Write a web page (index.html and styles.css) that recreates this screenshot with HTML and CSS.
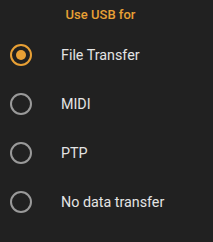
FILE: index.html
```html
<!DOCTYPE html>
<html lang="en">
<head>
    <meta charset="UTF-8">
    <title>Use USB for</title>
    <link rel="stylesheet" href="styles.css">
</head>
<body>
    <div class="dialog">
        <div class="title">Use USB for</div>
        <div class="option">
            <span class="radio checked"></span>
            <span class="label">File Transfer</span>
        </div>
        <div class="option">
            <span class="radio"></span>
            <span class="label">MIDI</span>
        </div>
        <div class="option">
            <span class="radio"></span>
            <span class="label">PTP</span>
        </div>
        <div class="option">
            <span class="radio"></span>
            <span class="label">No data transfer</span>
        </div>
    </div>
</body>
</html>
```

FILE: styles.css
```css
html, body {
    margin: 0;
    background: #212121;
}
.dialog {
    width: 213px;
    height: 242px;
    font-family: Roboto, "Liberation Sans", sans-serif;
    color: #e4e4e4;
}
.title {
    text-align: center;
    color: #e8a035;
    font-size: 13px;
    font-weight: 500;
    padding-top: 7px;
    padding-right: 12px;
    height: 23px;
    line-height: 16px;
}
.option {
    display: flex;
    align-items: center;
    height: 49px;
    padding-left: 10px;
}
.radio {
    box-sizing: border-box;
    width: 22px;
    height: 22px;
    border: 2px solid #9a9a9a;
    border-radius: 50%;
    display: flex;
    align-items: center;
    justify-content: center;
}
.radio.checked {
    border-color: #e8a035;
}
.radio.checked::after {
    content: "";
    width: 10px;
    height: 10px;
    border-radius: 50%;
    background: #e8a035;
}
.label {
    margin-left: 29px;
    font-size: 14.3px;
}
```
